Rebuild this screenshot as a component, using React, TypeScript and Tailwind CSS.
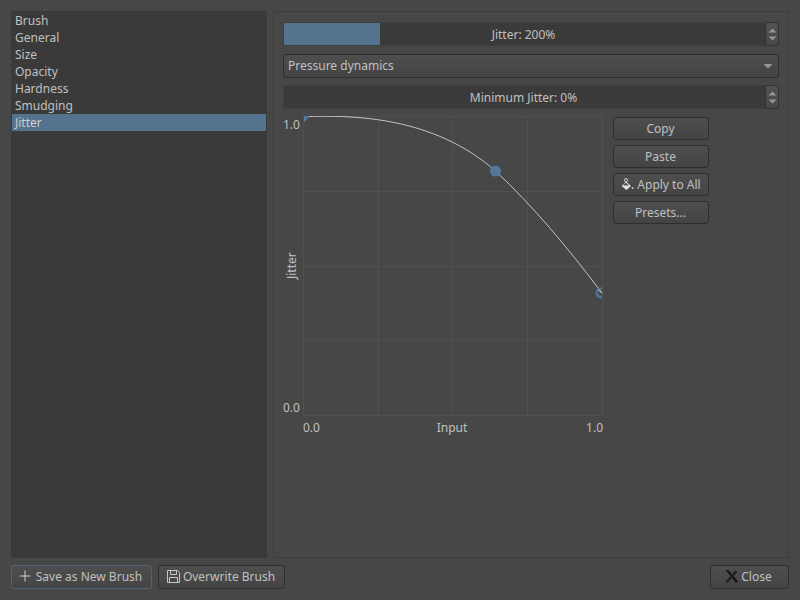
const categories = ['Brush', 'General', 'Size', 'Opacity', 'Hardness', 'Smudging', 'Jitter'];

function Spinner() {
  return (
    <div className="flex w-[14px] flex-col items-center justify-center gap-[3px] self-stretch rounded-r-[3px] border border-[#333333] bg-gradient-to-b from-[#525252] to-[#484848]">
      <svg width="9" height="5" viewBox="0 0 9 5"><path d="M4.5 0.5 L8.5 4.5 H0.5 Z" fill="#969696" /></svg>
      <svg width="9" height="5" viewBox="0 0 9 5"><path d="M0.5 0.5 H8.5 L4.5 4.5 Z" fill="#969696" /></svg>
    </div>
  );
}

function SliderField({ label, fill }: { label: string; fill?: number }) {
  return (
    <div className="flex h-[24px] w-full overflow-hidden rounded-[3px] bg-[#3a3a3a]">
      <div className="relative flex flex-1 items-center justify-center border-y border-l border-[#3f3f3f] pr-[2px]">
        {fill ? <div className="absolute inset-y-0 left-0 bg-[#54738f]" style={{ width: fill }} /> : null}
        <span className="relative">{label}</span>
      </div>
      <Spinner />
    </div>
  );
}

function SideButton({ children }: { children: React.ReactNode }) {
  return (
    <button className="flex h-[23px] w-[96px] items-center justify-center gap-[3px] rounded-[3px] border border-[#2e2e2e] bg-gradient-to-b from-[#4e4e4e] to-[#444444] pr-[1px]">
      {children}
    </button>
  );
}

function BucketIcon() {
  return (
    <svg width="14" height="14" viewBox="0 0 14 14" fill="none">
      <circle cx="6" cy="2.2" r="1.6" stroke="#d0d0d0" strokeWidth="1" />
      <path d="M6 3.5 L11 8 L6.5 12 L1.5 8 Z" fill="#e2e2e2" />
      <path d="M2.5 7.5 L5.8 4.6 L9 7.5 Z" fill="#555555" />
      <circle cx="12.6" cy="10" r="1" fill="#c8c8c8" />
    </svg>
  );
}

function SaveIcon() {
  return (
    <svg width="13" height="13" viewBox="0 0 13 13" fill="none" stroke="#c8c8c8" strokeWidth="1">
      <path d="M0.5 0.5 H10.5 L12.5 2.5 V12.5 H0.5 Z" />
      <path d="M3.5 0.5 V4.5 H9.5 V0.5" />
      <path d="M2.5 12.5 V7.5 H10.5 V12.5" />
    </svg>
  );
}

function CloseIcon() {
  return (
    <svg width="13" height="13" viewBox="0 0 13 13">
      <path d="M0.5 0 L3.5 0 L13 11.5 L11 13 Z" fill="#161616" />
      <path d="M10.5 0.5 L12.5 2 L2.5 13 L0 12 Z" fill="#202020" />
    </svg>
  );
}

function CurveGraph() {
  return (
    <svg width="300" height="300" viewBox="0 0 300 300" className="block">
      <clipPath id="plot"><rect x="0" y="0" width="299" height="300" /></clipPath>
      <g stroke="#505050" strokeWidth="1" shapeRendering="crispEdges">
        <path d="M0.5 0 V300 M75.5 0 V300 M149.5 0 V300 M224.5 0 V300 M299.5 0 V300" />
        <path d="M0 0.5 H300 M0 75.5 H300 M0 150.5 H300 M0 224.5 H300 M0 299.5 H300" />
      </g>
      <path d="M1 0 H7 L1 6.5 Z" fill="#54789b" />
      <path d="M6 0.5 C50 -0.5 130 0 192.5 55 C230 90 265 132 299 177" fill="none" stroke="#c4c4c4" strokeWidth="1" />
      <circle cx="192.5" cy="55" r="5.5" fill="#54789b" />
      <g clipPath="url(#plot)">
        <circle cx="298" cy="177" r="4.2" fill="none" stroke="#4f6f8d" strokeWidth="3" />
      </g>
      <path d="M295 173 L299 177.5" stroke="#c4c4c4" strokeWidth="1" />
    </svg>
  );
}

export default function App() {
  return (
    <div className="flex h-[600px] w-[800px] flex-col gap-[7px] bg-[#474747] p-[11px] font-['Noto_Sans',sans-serif] text-[12px] leading-[17px] text-[#c0c0c0]">
      <div className="flex h-[547px] gap-[6px]">
        <ul className="h-full w-[256px] bg-[#3a3a3a] px-[1px] pt-[1px]">
          {categories.map((name) => (
            <li
              key={name}
              className={`h-[17px] pl-[3px] ${name === 'Jitter' ? 'bg-[#54738f] text-[#cfcfcf]' : ''}`}
            >
              {name}
            </li>
          ))}
        </ul>

        <div className="flex h-full flex-1 flex-col border border-[#3d3d3d] px-[9px] pt-[10px]">
          <SliderField label="Jitter: 200%" fill={96} />
          <div className="mt-[8px] flex h-[24px] items-center justify-between rounded-[3px] border border-[#2e2e2e] bg-gradient-to-b from-[#4e4e4e] to-[#444444] pb-[2px] pl-[4px] pr-[5px]">
            <span>Pressure dynamics</span>
            <svg width="10" height="5" viewBox="0 0 10 5" className="mt-[2px]"><path d="M0.5 0 H9.5 L5 4.5 Z" fill="#969696" /></svg>
          </div>
          <div className="mt-[7px]">
            <SliderField label="Minimum Jitter: 0%" />
          </div>

          <div className="mt-[7px] flex">
            <div className="flex flex-col">
              <div className="flex">
                <div className="flex h-[300px] w-[20px] flex-col items-start justify-between">
                  <span>1.0</span>
                  <span className="ml-[1px] mt-[14px] h-[14px] w-[12px] -rotate-90 whitespace-nowrap">Jitter</span>
                  <span>0.0</span>
                </div>
                <CurveGraph />
              </div>
              <div className="ml-[20px] mt-[3px] flex w-[300px] items-center justify-between">
                <span>0.0</span>
                <span className="mr-[2px]">Input</span>
                <span>1.0</span>
              </div>
            </div>
            <div className="ml-[10px] flex flex-col gap-[5px] pt-[1px]">
              <SideButton>Copy</SideButton>
              <SideButton>Paste</SideButton>
              <SideButton><BucketIcon />Apply to All</SideButton>
              <SideButton>Presets...</SideButton>
            </div>
          </div>
        </div>
      </div>

      <div className="flex h-[24px] items-center">
        <button className="flex h-[24px] w-[141px] items-center justify-center gap-[5px] rounded-[3px] border border-[#4f6479] bg-gradient-to-b from-[#4e4e4e] to-[#444444] pb-[2px] pr-[2px]">
          <svg width="12" height="12" viewBox="0 0 12 12"><path d="M6 0.5 V11.5 M0.5 6 H11.5" stroke="#d0d0d0" strokeWidth="1" fill="none" /></svg>
          Save as New Brush
        </button>
        <button className="ml-[6px] flex h-[24px] w-[127px] items-center justify-center gap-[3px] rounded-[3px] border border-[#2e2e2e] bg-gradient-to-b from-[#4e4e4e] to-[#444444] pb-[2px] pr-[1px]">
          <SaveIcon />
          Overwrite Brush
        </button>
        <button className="ml-auto flex h-[24px] w-[79px] items-center justify-center gap-[3px] rounded-[3px] border border-[#2e2e2e] bg-gradient-to-b from-[#4e4e4e] to-[#444444] pb-[2px] pr-[2px]">
          <CloseIcon />
          Close
        </button>
      </div>
    </div>
  );
}
